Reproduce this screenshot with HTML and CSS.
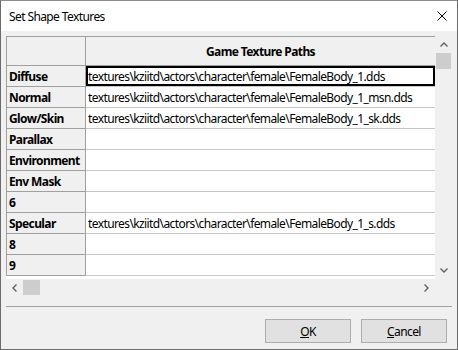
FILE: index.html
```html
<!DOCTYPE html>
<html>
<head>
  <meta charset="utf-8"/>
  <link rel="stylesheet" href="styles.css">
  <title>Set Shape Textures</title>
</head>
<body>
  <div class="dialog">
    <div class="titlebar">
      <span class="title">Set Shape Textures</span>
      <svg class="close" width="10" height="10" viewBox="0 0 10 10">
        <path d="M0.5 0.5 L9.5 9.5 M9.5 0.5 L0.5 9.5" stroke="#000" stroke-width="1" fill="none"/>
      </svg>
    </div>
    <div class="content">
      <div class="grid-control">
        <div class="viewport">
          <div class="grid">
            <div class="cell corner"></div>
            <div class="cell col-head">Game Texture Paths</div>

            <div class="cell row-head">Diffuse</div>
            <div class="cell data selected">textures\kziitd\actors\character\female\FemaleBody_1.dds</div>
            <div class="cell row-head">Normal</div>
            <div class="cell data">textures\kziitd\actors\character\female\FemaleBody_1_msn.dds</div>
            <div class="cell row-head">Glow/Skin</div>
            <div class="cell data">textures\kziitd\actors\character\female\FemaleBody_1_sk.dds</div>
            <div class="cell row-head">Parallax</div>
            <div class="cell data"></div>
            <div class="cell row-head">Environment</div>
            <div class="cell data"></div>
            <div class="cell row-head">Env Mask</div>
            <div class="cell data"></div>
            <div class="cell row-head">6</div>
            <div class="cell data"></div>
            <div class="cell row-head">Specular</div>
            <div class="cell data">textures\kziitd\actors\character\female\FemaleBody_1_s.dds</div>
            <div class="cell row-head">8</div>
            <div class="cell data"></div>
            <div class="cell row-head">9</div>
            <div class="cell data"></div>
          </div>
        </div>
        <div class="vscroll">
          <div class="arrow">
            <svg width="8" height="5" viewBox="0 0 8 5"><path d="M0.5 4.5 L4 1 L7.5 4.5" stroke="#606060" stroke-width="1.4" fill="none"/></svg>
          </div>
          <div class="thumb-v"></div>
          <div class="track"></div>
          <div class="arrow">
            <svg width="8" height="5" viewBox="0 0 8 5"><path d="M0.5 0.5 L4 4 L7.5 0.5" stroke="#606060" stroke-width="1.4" fill="none"/></svg>
          </div>
        </div>
        <div class="hscroll">
          <div class="arrow">
            <svg width="5" height="8" viewBox="0 0 5 8"><path d="M4.5 0.5 L1 4 L4.5 7.5" stroke="#606060" stroke-width="1.4" fill="none"/></svg>
          </div>
          <div class="thumb-h"></div>
          <div class="track"></div>
          <div class="arrow">
            <svg width="5" height="8" viewBox="0 0 5 8"><path d="M0.5 0.5 L4 4 L0.5 7.5" stroke="#606060" stroke-width="1.4" fill="none"/></svg>
          </div>
        </div>
        <div class="scroll-corner"></div>
      </div>
      <div class="separator"></div>
      <div class="buttons">
        <button class="btn"><u>O</u>K</button>
        <button class="btn"><u>C</u>ancel</button>
      </div>
    </div>
  </div>
</body>
</html>
```

FILE: styles.css
```css
body {
  margin: 0;
  font-family: "Noto Sans", "Open Sans", sans-serif;
  font-size: 12px;
  letter-spacing: -0.6px;
  color: #000;
}

.dialog {
  width: 458px;
  height: 350px;
  box-sizing: border-box;
  border: 1px solid #6b6b6b;
  border-top-color: #8a8a8a;
  background: #f0f0f0;
  display: flex;
  flex-direction: column;
}

.titlebar {
  height: 30px;
  background: #fff;
  display: flex;
  align-items: center;
  padding: 0 10px 0 8px;
}

.title {
  flex: 1 1 auto;
}

.close {
  display: block;
}

.content {
  flex: 1 1 auto;
  padding: 5px 5px 0 5px;
  display: flex;
  flex-direction: column;
}

/* grid with its two scrollbars */
.grid-control {
  display: grid;
  grid-template-columns: 429px 17px;
  grid-template-rows: 243px 17px;
}

.viewport {
  background: #fff;
  overflow: hidden;
}

.grid {
  display: grid;
  grid-template-columns: 80px 349px;
  grid-template-rows: 30px repeat(10, 21px);
}

.cell {
  box-sizing: border-box;
  border-bottom: 1px solid #c8c8c8;
  white-space: nowrap;
  overflow: hidden;
  display: flex;
  align-items: center;
}

.corner,
.col-head {
  background: #f0f0f0;
  border-top: 1px solid #a0a0a0;
  border-bottom-color: #a0a0a0;
}

.col-head {
  justify-content: center;
  font-weight: bold;
}

.corner,
.row-head {
  border-left: 1px solid #a0a0a0;
  border-right: 1px solid #a0a0a0;
}

.row-head {
  background: #f0f0f0;
  border-bottom-color: #a0a0a0;
  font-weight: bold;
  padding-left: 2px;
}

.data {
  padding-left: 2px;
}

.selected {
  box-shadow: inset 0 0 0 2px #000;
}

.vscroll,
.hscroll {
  background: #f0f0f0;
  display: flex;
}

.vscroll {
  flex-direction: column;
}

.arrow {
  flex: 0 0 17px;
  height: 17px;
  display: flex;
  align-items: center;
  justify-content: center;
}

.track {
  flex: 1 1 auto;
}

.thumb-v {
  height: 16px;
  margin: 0 1px;
  background: #cdcdcd;
}

.thumb-h {
  width: 17px;
  margin: 1px 0;
  background: #cdcdcd;
}

.scroll-corner {
  background: #f0f0f0;
}

.separator {
  margin-top: 10px;
  border-top: 1px solid #a0a0a0;
}

.buttons {
  display: flex;
  justify-content: flex-end;
  gap: 10px;
  padding-top: 12px;
  padding-right: 5px;
}

.btn {
  width: 86px;
  height: 24px;
  background: #e1e1e1;
  border: 1px solid #adadad;
  font-family: inherit;
  font-size: 12px;
  letter-spacing: inherit;
  color: #000;
  padding: 0;
}
```
